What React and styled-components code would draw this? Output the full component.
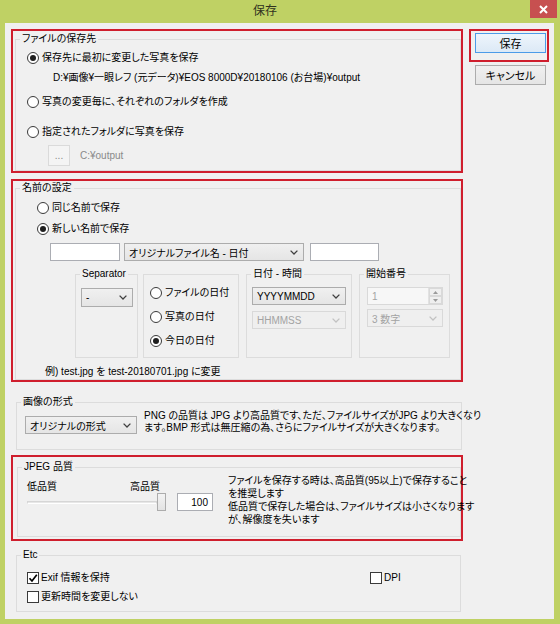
import React from 'react';
import styled, { createGlobalStyle } from 'styled-components';

const GlobalStyle = createGlobalStyle`
  html, body { margin: 0; padding: 0; }
  body {
    width: 560px;
    height: 624px;
    overflow: hidden;
    background: #bfd164;
    font-family: "Liberation Sans", "Noto Sans CJK JP", sans-serif;
    font-size: 10px;
    font-feature-settings: "palt";
    color: #000;
  }
`;

const Window = styled.div`
  width: 560px;
  height: 624px;
  display: flex;
  flex-direction: column;
  background: #bfd164;
`;

const TitleBar = styled.div`
  height: 23px;
  display: flex;
  align-items: flex-start;
`;

const Title = styled.div`
  flex: 1;
  text-align: center;
  font-size: 12px;
  line-height: 23px;
  color: #30321f;
`;

const CloseButton = styled.div`
  margin-right: 3px;
  width: 27px;
  height: 18px;
  background: #c75050;
  display: flex;
  align-items: center;
  justify-content: center;
`;

const Client = styled.div`
  margin: 0 6px 5px 5px;
  height: 596px;
  background: #f0f0f0;
  display: flex;
  padding: 6px 0 0 6px;
  box-sizing: border-box;
`;

const LeftCol = styled.div`
  width: 452px;
  display: flex;
  flex-direction: column;
`;

const RightCol = styled.div`
  margin-left: 6px;
  width: 80px;
  display: flex;
  flex-direction: column;
`;

const Highlight = styled.div`
  border: 2px solid #cf1e2d;
  padding: ${p => p.$pad || '0'};
  margin-top: ${p => p.$mt || 0}px;
  display: flex;
  flex-direction: column;
`;

const Group = styled.fieldset`
  margin: ${p => p.$m || '0'};
  padding: 0;
  border: 1px solid #dcdcdc;
  min-width: 0;
  width: ${p => (p.$w ? p.$w + 'px' : 'auto')};
  box-sizing: border-box;
`;

const Legend = styled.legend`
  margin-left: ${p => (p.$ml != null ? p.$ml : 4)}px;
  padding: 0 2px;
  line-height: ${p => p.$lh || 14}px;
  height: ${p => p.$lh || 14}px;
`;

const GroupBody = styled.div`
  padding: ${p => p.$pad || '0'};
  display: flex;
  flex-direction: column;
  align-items: flex-start;
`;

const Row = styled.div`
  display: flex;
  align-items: ${p => p.$align || 'center'};
  margin: ${p => p.$m || '0'};
  gap: ${p => p.$gap || 0}px;
`;

const RadioRow = styled.label`
  display: flex;
  align-items: center;
  gap: 3px;
  height: 16px;
  line-height: 16px;
  margin: ${p => p.$m || '0'};
  white-space: nowrap;
`;

const RadioDot = styled.span`
  width: 12px;
  height: 12px;
  box-sizing: border-box;
  border-radius: 50%;
  border: 1px solid #3a3a3a;
  background: #fff;
  display: inline-flex;
  align-items: center;
  justify-content: center;
  flex: none;
  &::after {
    content: '';
    width: 6px;
    height: 6px;
    border-radius: 50%;
    background: #1e1e1e;
    display: ${p => (p.$on ? 'block' : 'none')};
  }
`;

const Radio = ({ on, m, children }) => (
  <RadioRow $m={m}>
    <RadioDot $on={on} />
    <span>{children}</span>
  </RadioRow>
);

const CheckRow = styled.label`
  display: flex;
  align-items: center;
  gap: 2px;
  height: 14px;
  line-height: 14px;
  margin: ${p => p.$m || '0'};
  white-space: nowrap;
`;

const CheckBox = styled.span`
  width: 12px;
  height: 12px;
  box-sizing: border-box;
  border: 1px solid #3a3a3a;
  background: #fff;
  display: inline-flex;
  align-items: center;
  justify-content: center;
  flex: none;
`;

const Check = ({ on, m, children }) => (
  <CheckRow $m={m}>
    <CheckBox>
      {on && (
        <svg width="10" height="10" viewBox="0 0 10 10">
          <path d="M1.5 5.2 L4 8 L8.8 1.8" fill="none" stroke="#000" strokeWidth="1.7" />
        </svg>
      )}
    </CheckBox>
    <span>{children}</span>
  </CheckRow>
);

const PathText = styled.div`
  margin: 4px 0 0 26px;
  height: 16px;
  line-height: 16px;
  white-space: nowrap;
`;

const SmallButton = styled.div`
  width: 22px;
  height: 21px;
  box-sizing: border-box;
  border: 1px solid #dadada;
  background: #f4f4f4;
  color: #8a8a8a;
  display: flex;
  align-items: center;
  justify-content: center;
  line-height: 1;
`;

const Muted = styled.span`
  color: #8a8a8a;
  margin-left: ${p => p.$ml || 0}px;
`;

const TextInput = styled.div`
  width: ${p => p.$w}px;
  height: 18px;
  box-sizing: border-box;
  border: 1px solid #abadb3;
  background: #fff;
  display: flex;
  align-items: center;
  justify-content: ${p => (p.$right ? 'flex-end' : 'flex-start')};
  padding: 0 4px;
  margin: ${p => p.$m || '0'};
`;

const SelectBox = styled.div`
  box-sizing: border-box;
  width: ${p => p.$w}px;
  height: ${p => p.$h || 18}px;
  flex: none;
  display: flex;
  align-items: center;
  justify-content: space-between;
  padding: 0 5px 0 4px;
  margin: ${p => p.$m || '0'};
  border: 1px solid ${p => (p.$disabled ? '#d9d9d9' : '#acacac')};
  background: ${p => (p.$disabled ? '#efefef' : 'linear-gradient(#f0f0f0, #e5e5e5)')};
  color: ${p => (p.$disabled ? '#a3a3a3' : '#000')};
  white-space: nowrap;
`;

const Chevron = ({ color = '#404040' }) => (
  <svg width="8" height="5" viewBox="0 0 8 5">
    <path d="M0.6 0.6 L4 4 L7.4 0.6" fill="none" stroke={color} strokeWidth="1.3" />
  </svg>
);

const Select = ({ w, h, m, disabled, children }) => (
  <SelectBox $w={w} $h={h} $m={m} $disabled={disabled}>
    <span>{children}</span>
    <Chevron color={disabled ? '#c2c2c2' : '#404040'} />
  </SelectBox>
);

const SubGroups = styled.div`
  display: flex;
  align-items: flex-start;
  margin: 7px 0 0 38px;
`;

const SubGroup = styled.fieldset`
  margin: ${p => (p.$noLegend ? '6px' : '0')} 0 0 ${p => p.$ml || 0}px;
  padding: 0;
  border: 1px solid #dcdcdc;
  width: ${p => p.$w}px;
  height: ${p => (p.$noLegend ? 84 : 90)}px;
  box-sizing: border-box;
  min-width: 0;
`;

const SubBody = styled.div`
  display: flex;
  flex-direction: column;
  align-items: flex-start;
  gap: ${p => p.$gap || 0}px;
  padding: ${p => p.$pad || '0'};
`;

const SpinBox = styled.div`
  width: 76px;
  height: 18px;
  box-sizing: border-box;
  border: 1px solid #d9d9d9;
  background: #f7f7f7;
  color: #a3a3a3;
  display: flex;
  align-items: stretch;
  margin: ${p => p.$m || '0'};
`;

const SpinValue = styled.span`
  flex: 1;
  padding-left: 4px;
  display: flex;
  align-items: center;
`;

const SpinArrows = styled.div`
  width: 13px;
  display: flex;
  flex-direction: column;
  border-left: 1px solid #e2e2e2;
`;

const SpinArrow = styled.div`
  flex: 1;
  display: flex;
  align-items: center;
  justify-content: center;
  background: #efefef;
  border: 1px solid #d9d9d9;
`;

const Example = styled.div`
  margin: 7px 0 0 8px;
  line-height: 14px;
  height: 14px;
`;

const FormatText = styled.div`
  margin-left: 7px;
  line-height: 12px;
  white-space: nowrap;
`;

const QualityLeft = styled.div`
  display: flex;
  flex-direction: column;
  padding-left: 9px;
`;

const QualityLabels = styled.div`
  display: flex;
  justify-content: space-between;
  width: 133px;
  margin-top: 7px;
  line-height: 12px;
`;

const SliderRow = styled.div`
  display: flex;
  align-items: center;
  height: 18px;
`;

const Track = styled.div`
  width: 130px;
  height: 3px;
  box-sizing: border-box;
  border: 1px solid #d6d6d6;
  border-bottom-color: #fff;
  background: #e7e7e7;
`;

const Thumb = styled.div`
  width: 9px;
  height: 18px;
  box-sizing: border-box;
  border: 1px solid #acacac;
  background: linear-gradient(#f3f3f3, #e3e3e3);
`;

const QualityText = styled.div`
  margin-left: 15px;
  line-height: 13px;
  white-space: nowrap;
`;

const EtcGrid = styled.div`
  display: grid;
  grid-template-columns: 343px auto;
  margin-top: 9px;
  padding-left: 10px;
`;

const DialogButton = styled.div`
  width: 71px;
  height: 20px;
  box-sizing: border-box;
  border: 1px solid ${p => (p.$default ? '#4c9be8' : '#acacac')};
  background: ${p => (p.$default ? 'linear-gradient(#eef5fc, #dce9f6)' : 'linear-gradient(#f0f0f0, #e5e5e5)')};
  display: flex;
  align-items: center;
  justify-content: center;
  font-size: 11px;
  margin: ${p => p.$m || '0'};
`;

export default function App() {
  return (
    <>
      <GlobalStyle />
      <Window>
        <TitleBar>
          <Title>保存</Title>
          <CloseButton>
            <svg width="9" height="9" viewBox="0 0 9 9">
              <path d="M1 1 L8 8 M8 1 L1 8" stroke="#fff" strokeWidth="2" />
            </svg>
          </CloseButton>
        </TitleBar>
        <Client>
          <LeftCol>
            <Highlight $pad="1px 0 0 2px">
              <Group>
                <Legend>ファイルの保存先</Legend>
                <GroupBody $pad="4px 0 4px 11px">
                  <Radio on>保存先に最初に変更した写真を保存</Radio>
                  <PathText>D:¥画像¥一眼レフ (元データ)¥EOS 8000D¥20180106 (お台場)¥output</PathText>
                  <Radio m="8px 0 0">写真の変更毎に、それぞれのフォルダを作成</Radio>
                  <Radio m="14px 0 0">指定されたフォルダに写真を保存</Radio>
                  <Row $m="5px 0 0 21px">
                    <SmallButton>...</SmallButton>
                    <Muted $ml={10}>C:¥output</Muted>
                  </Row>
                </GroupBody>
              </Group>
            </Highlight>

            <Highlight $pad="0 0 0 2px" $mt={6}>
              <Group>
                <Legend>名前の設定</Legend>
                <GroupBody $pad="0 0 0 21px">
                  <Radio m="5px 0 0">同じ名前で保存</Radio>
                  <Radio on m="5px 0 0">新しい名前で保存</Radio>
                  <Row $m="6px 0 0 13px">
                    <TextInput $w={70} />
                    <Select w={180} m="0 0 0 4px">オリジナルファイル名 - 日付</Select>
                    <TextInput $w={69} $m="0 0 0 6px" />
                  </Row>
                  <SubGroups>
                    <SubGroup $w={63}>
                      <Legend $lh={12}>Separator</Legend>
                      <SubBody $pad="8px 0 0 5px">
                        <Select w={52} h={19}>-</Select>
                      </SubBody>
                    </SubGroup>
                    <SubGroup $w={96} $ml={5} $noLegend>
                      <SubBody $pad="10px 0 0 6px" $gap={8}>
                        <Radio>ファイルの日付</Radio>
                        <Radio>写真の日付</Radio>
                        <Radio on>今日の日付</Radio>
                      </SubBody>
                    </SubGroup>
                    <SubGroup $w={106} $ml={7}>
                      <Legend $lh={12}>日付 - 時間</Legend>
                      <SubBody $pad="7px 0 0 5px" $gap={6}>
                        <Select w={94}>YYYYMMDD</Select>
                        <Select w={94} disabled>HHMMSS</Select>
                      </SubBody>
                    </SubGroup>
                    <SubGroup $w={91} $ml={7}>
                      <Legend $lh={12}>開始番号</Legend>
                      <SubBody $pad="7px 0 0 7px" $gap={4}>
                        <SpinBox>
                          <SpinValue>1</SpinValue>
                          <SpinArrows>
                            <SpinArrow>
                              <svg width="5" height="3" viewBox="0 0 5 3"><path d="M0 3 L2.5 0 L5 3 Z" fill="#9a9a9a" /></svg>
                            </SpinArrow>
                            <SpinArrow>
                              <svg width="5" height="3" viewBox="0 0 5 3"><path d="M0 0 L2.5 3 L5 0 Z" fill="#9a9a9a" /></svg>
                            </SpinArrow>
                          </SpinArrows>
                        </SpinBox>
                        <Select w={76} disabled>3 数字</Select>
                      </SubBody>
                    </SubGroup>
                  </SubGroups>
                  <Example>例) test.jpg を test-20180701.jpg に変更</Example>
                </GroupBody>
              </Group>
            </Highlight>

            <Group $m="13px 0 0 5px" $w={446}>
              <Legend>画像の形式</Legend>
              <GroupBody $pad="1px 0 15px 8px">
                <Row $align="flex-start">
                  <Select w={112} m="6px 0 0">オリジナルの形式</Select>
                  <FormatText>
                    PNG の品質は JPG より高品質です、ただ、ファイルサイズがJPG より大きくなり
                    <br />
                    ます。BMP 形式は無圧縮の為、さらにファイルサイズが大きくなります。
                  </FormatText>
                </Row>
              </GroupBody>
            </Group>

            <Highlight $pad="3px 0 2px 4px" $mt={5}>
              <Group>
                <Legend>JPEG 品質</Legend>
                <Row $align="flex-start" $m="0 0 10px 0">
                  <QualityLeft>
                    <QualityLabels>
                      <span>低品質</span>
                      <span>高品質</span>
                    </QualityLabels>
                    <SliderRow>
                      <Track />
                      <Thumb />
                      <TextInput $w={36} $right $m="0 0 0 11px">100</TextInput>
                    </SliderRow>
                  </QualityLeft>
                  <QualityText>
                    ファイルを保存する時は、高品質(95以上)で保存すること
                    <br />
                    を推奨します
                    <br />
                    低品質で保存した場合は、ファイルサイズは小さくなります
                    <br />
                    が、解像度を失います
                  </QualityText>
                </Row>
              </Group>
            </Highlight>

            <Group $m="7px 0 0 5px" $w={445}>
              <Legend>Etc</Legend>
              <GroupBody $pad="0 0 7px 0">
                <EtcGrid>
                  <Check on>Exif 情報を保持</Check>
                  <Check>DPI</Check>
                  <Check m="5px 0 0">更新時間を変更しない</Check>
                </EtcGrid>
              </GroupBody>
            </Group>
          </LeftCol>

          <RightCol>
            <Highlight $pad="2px 0 7px 4px">
              <DialogButton $default>保存</DialogButton>
            </Highlight>
            <DialogButton $m="3px 0 0 6px">キャンセル</DialogButton>
          </RightCol>
        </Client>
      </Window>
    </>
  );
}
